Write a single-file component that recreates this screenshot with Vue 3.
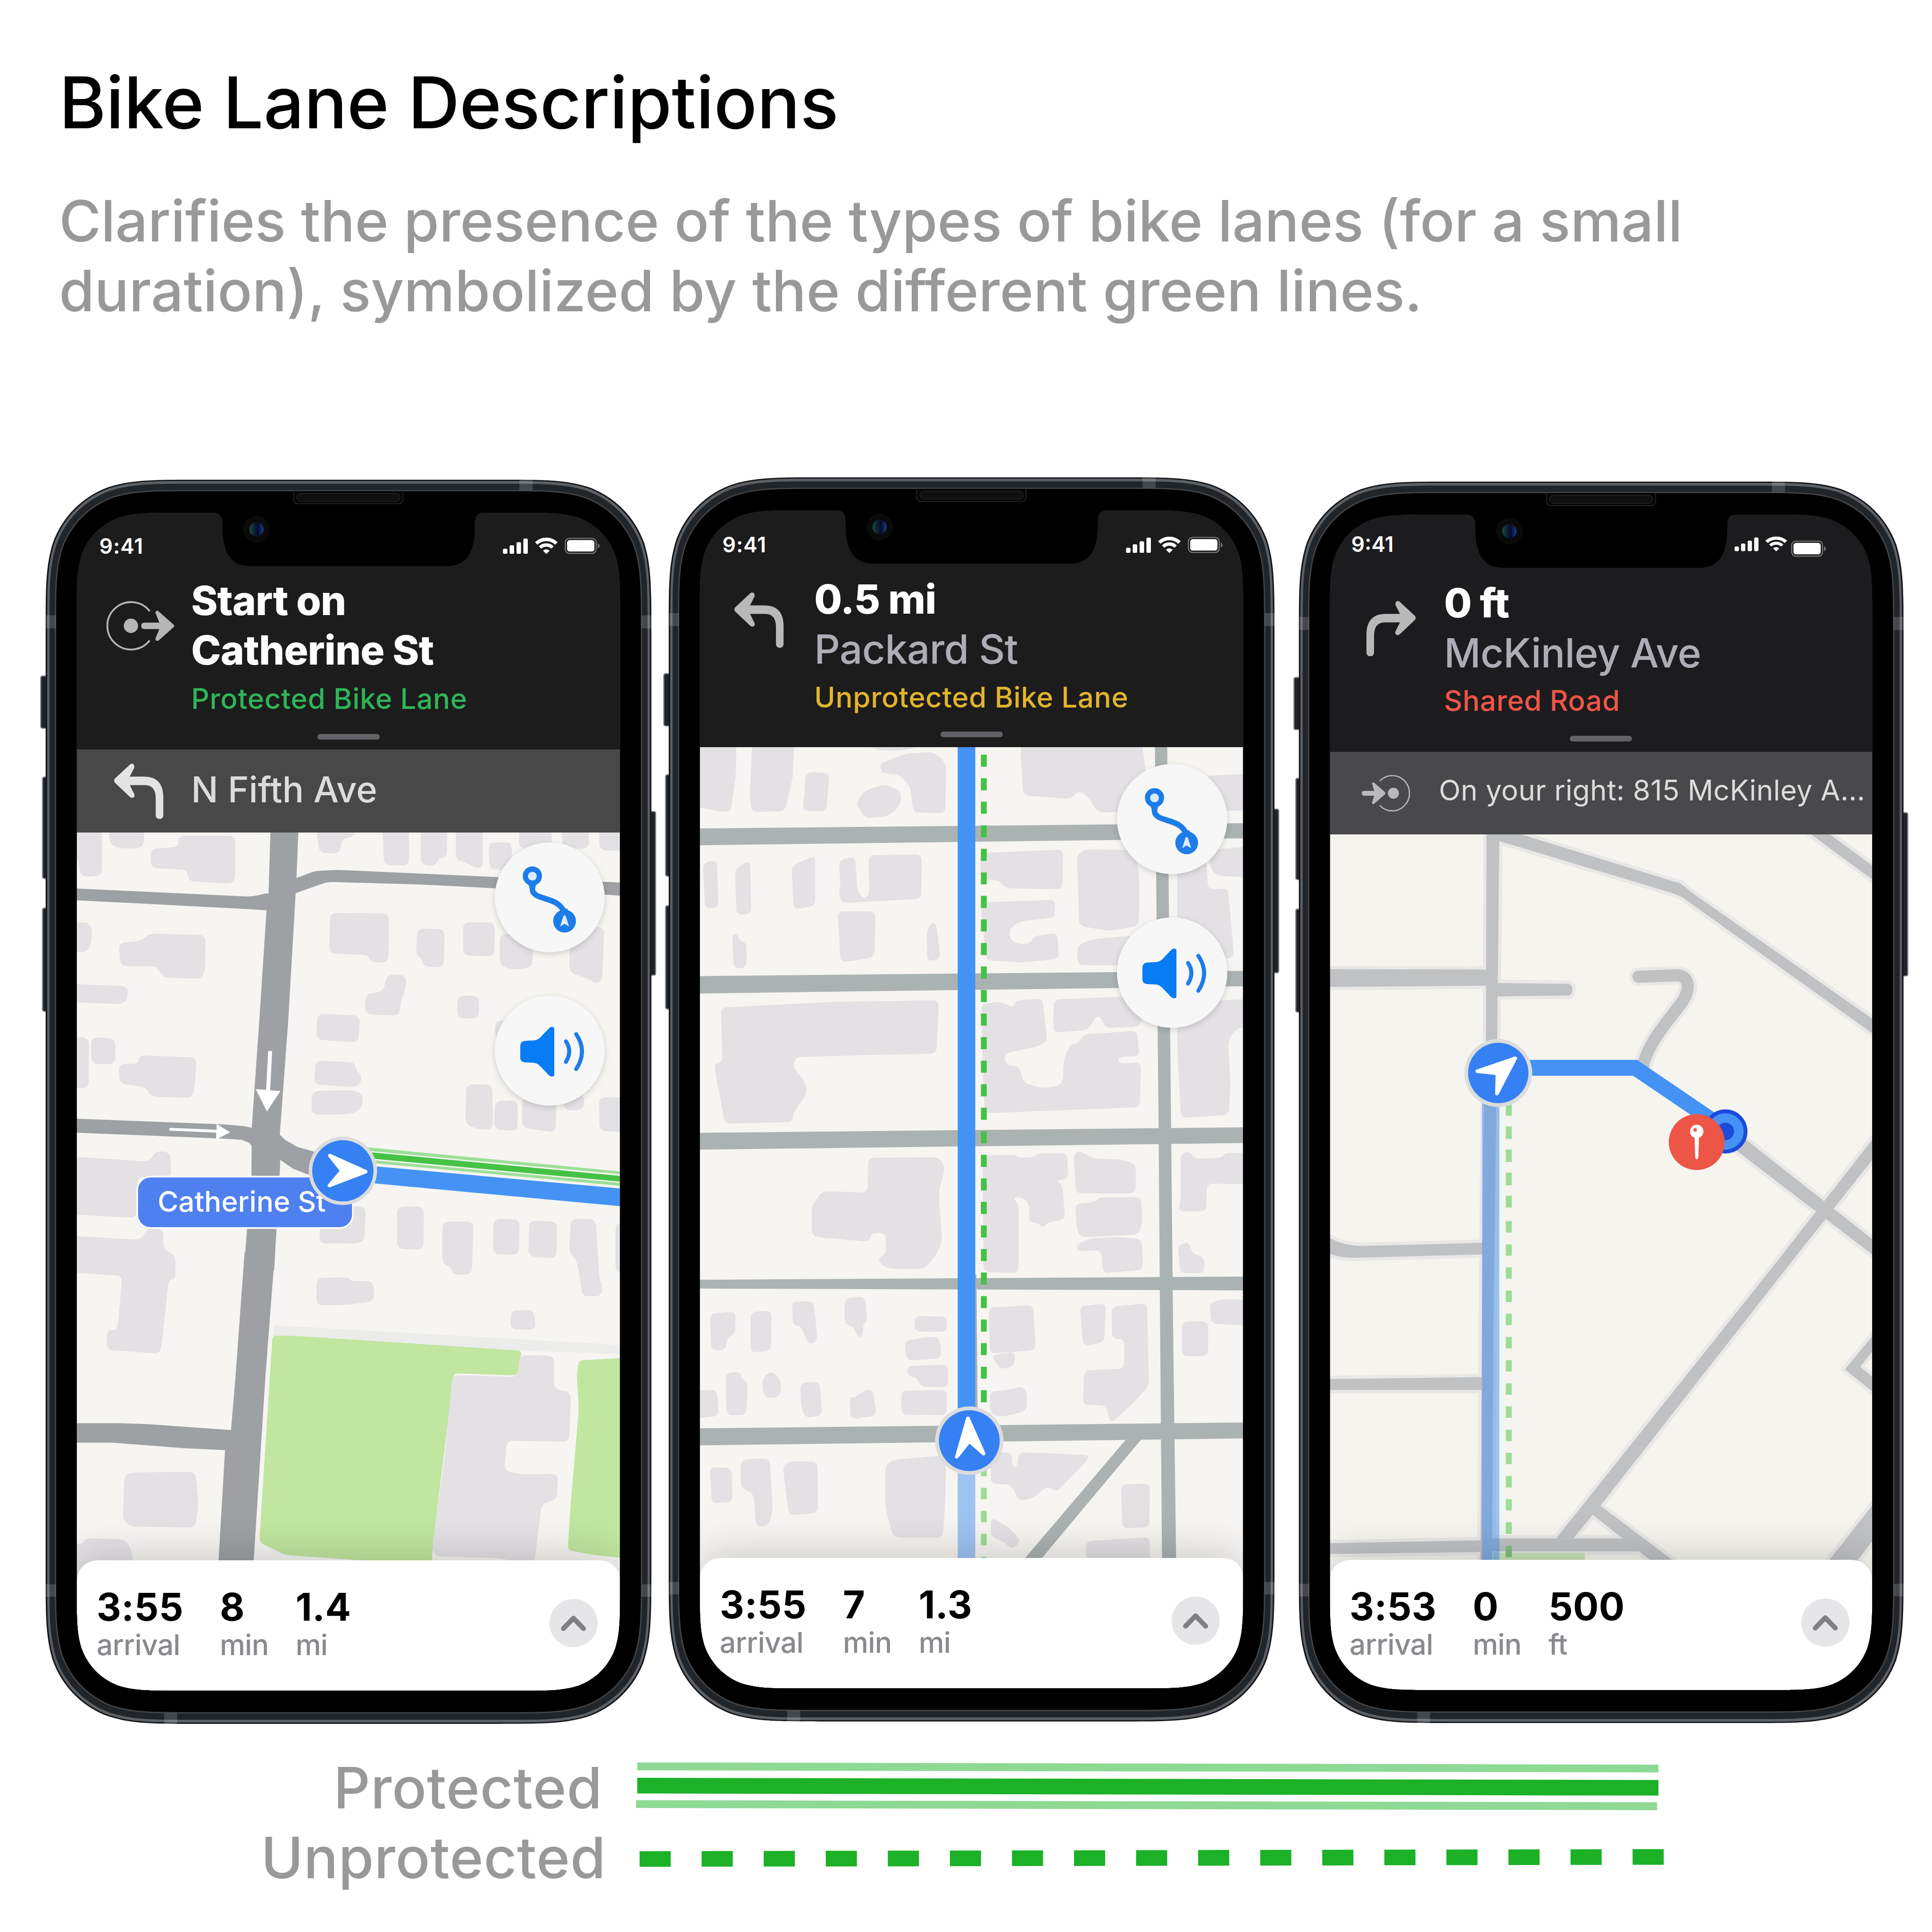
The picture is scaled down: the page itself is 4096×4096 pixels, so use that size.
<script setup>
// Maps a "x,y x,y" list from a tile's own grid onto the board and rounds its corners.
function outline(tile, list, radius = 0) {
  const pts = list.trim().split(/\s+/).map((p) => {
    const [x, y] = p.split(',').map(Number)
    return [tile.x + x * tile.sx, tile.y + y * tile.sy]
  })
  if (!radius) return 'M' + pts.map((p) => p[0].toFixed(1) + ' ' + p[1].toFixed(1)).join('L') + 'Z'
  const n = pts.length
  let d = ''
  for (let i = 0; i < n; i++) {
    const a = pts[(i + n - 1) % n]
    const b = pts[i]
    const c = pts[(i + 1) % n]
    const toward = (q) => {
      const len = Math.hypot(q[0] - b[0], q[1] - b[1]) || 1
      const k = Math.min(radius, len / 2) / len
      return (b[0] + (q[0] - b[0]) * k).toFixed(1) + ' ' + (b[1] + (q[1] - b[1]) * k).toFixed(1)
    }
    d += (i ? 'L' : 'M') + toward(a) + 'Q' + b[0].toFixed(1) + ' ' + b[1].toFixed(1) + ' ' + toward(c)
  }
  return d + 'Z'
}

// Continuous-curvature rectangle, used for the device body and its display.
function squircle(x, y, w, h, r) {
  const a = 1.528665 * r, b = 1.08849 * r, c = 0.868407 * r, e = 0.631494 * r
  const f = 0.07491 * r, g = 0.372824 * r, k = 0.16906 * r
  const R = x + w, B = y + h
  return `M${x + a} ${y}H${R - a}C${R - b} ${y} ${R - c} ${y} ${R - e} ${y + f}C${R - g} ${y + k} ${R - k} ${y + g} ${R - f} ${y + e}` +
    `C${R} ${y + c} ${R} ${y + b} ${R} ${y + a}V${B - a}C${R} ${B - b} ${R} ${B - c} ${R - f} ${B - e}C${R - k} ${B - g} ${R - g} ${B - k} ${R - e} ${B - f}` +
    `C${R - c} ${B} ${R - b} ${B} ${R - a} ${B}H${x + a}C${x + b} ${B} ${x + c} ${B} ${x + e} ${B - f}C${x + g} ${B - k} ${x + k} ${B - g} ${x + f} ${B - e}` +
    `C${x} ${B - c} ${x} ${B - b} ${x} ${B - a}V${y + a}C${x} ${y + b} ${x} ${y + c} ${x + f} ${y + e}C${x + k} ${y + g} ${x + g} ${y + k} ${x + e} ${y + f}` +
    `C${x + c} ${y} ${x + b} ${y} ${x + a} ${y}Z`
}

const body = squircle(14.5, 2, 1354.5, 2782, 222)
const rim = squircle(18, 5, 1347.5, 2776, 219)
const band = squircle(23, 11, 1337.5, 2764, 214)
const lip = squircle(35, 25, 1313.5, 2736, 203)
const bezel = squircle(38, 28, 1307.5, 2730, 200)
const glass = squircle(84, 76, 1215, 2634, 148)

const tiles = {
  a: { x: 80, y: 1840, sx: 0.8929, sy: 0.6378 },
  b: { x: 80, y: 2800, sx: 0.8929, sy: 0.7015 },
  c: { x: 1480, y: 1050, sx: 0.8929, sy: 0.6378 },
  d: { x: 1480, y: 2000, sx: 0.8929, sy: 0.6059 },
  e: { x: 1480, y: 2850, sx: 0.8929, sy: 0.6696 },
  o: { x: 0, y: 0, sx: 1, sy: 1 },
}
const shapes = (tile, radius, lists) => lists.map((l) => outline(tiles[tile], l, radius))

const catherine = {
  buildings: [
    ...shapes('a', 16, [
      '90,0 166,0 166,185 112,190 106,125 90,120', '183,0 271,0 271,85 230,92 186,80',
      '358,44 500,44 500,180 495,213 382,205 380,165 288,158 288,90 358,85', '702,0 805,0 798,50 766,55 762,108 710,105',
      '868,0 935,0 935,150 872,148', '963,0 1030,0 1030,120 1008,125 1000,152 965,148',
      '1052,0 1119,0 1119,158 1100,158 1080,140 1052,130', '1134,68 1192,68 1192,168 1136,162',
      '1210,0 1292,0 1292,90 1210,90', '1315,0 1385,0 1385,90 1320,90', '1410,0 1490,0 1490,97 1412,97',
      '70,348 138,350 142,400 132,453 70,453', '285,388 425,393 425,500 418,546 318,543 305,503 212,502 208,420 262,415',
      '70,563 228,573 232,600 222,636 70,628', '70,752 133,752 133,930 70,932', '138,752 199,755 199,846 140,846',
      '258,815 403,822 400,900 393,965 288,960 275,925 210,915 208,845 258,845',
      '737,315 885,318 883,490 837,488 832,463 735,458', '955,370 1024,372 1022,505 972,505 965,470 952,465',
      '1070,348 1150,350 1148,468 1070,465', '880,530 928,535 927,580 915,620 910,677 824,670 826,600 870,592',
      '1162,390 1245,390 1244,505 1195,516 1162,500', '1338,370 1423,365 1423,400 1418,555 1402,563 1380,545 1336,525',
      '1056,606 1110,606 1110,686 1056,686', '706,668 812,676 808,770 703,760', '1150,695 1200,690 1200,760 1150,755',
      '700,833 800,840 802,870 815,880 815,910 800,927 697,917', '692,940 800,937 819,955 818,1000 790,1022 690,1023',
      '1078,916 1143,918 1145,1070 1125,1078 1095,1068 1076,1055', '1150,975 1207,973 1207,1080 1148,1075',
      '1218,960 1304,960 1302,1085 1270,1080 1218,1068', '1318,950 1373,950 1373,1005 1325,1010',
      '1410,962 1490,962 1490,1085 1412,1080', '70,1168 285,1188 300,1150 338,1155 338,1245 255,1240 253,1385 70,1372',
      '715,1345 827,1345 823,1470 790,1475 710,1475', '905,1345 972,1345 971,1496 905,1494',
      '1018,1398 1097,1398 1092,1584 1045,1584 1042,1560 1018,1545', '1147,1388 1212,1390 1210,1515 1145,1512',
      '1235,1395 1306,1398 1304,1527 1234,1520', '1340,1388 1402,1388 1412,1600 1419,1620 1417,1660 1368,1660 1366,1620 1354,1530 1336,1510',
      '1452,1402 1490,1402 1490,1578 1452,1578',
    ]),
    ...shapes('b', 16, [
      '70,-54 265,-39 278,-76 318,-76 320,-10 350,10 350,87 333,87 313,323 178,312 178,248 204,250 217,75 70,64',
      '703,82 785,80 790,92 845,92 848,155 790,167 703,170', '1190,185 1248,185 1252,248 1188,246',
      '235,702 400,700 408,800 400,878 235,875 218,850 222,715', '80,930 120,930 122,912 225,915 243,960 243,1100 80,1100',
    ]),
  ],
  alley: outline(tiles.b, '597,233 1480,297 1480,325 1200,313 593,268'),
  parks: shapes('b', 10, [
    '593,266 640,266 1217,314 1206,393 1047,386 1040,460 1005,820 990,1000 790,980 625,965 560,925 573,660',
    '1360,345 1490,336 1490,978 1400,965 1332,950 1340,800 1360,500 1355,390',
  ]),
  hall: outline(tiles.b, '1043,396 1060,392 1206,398 1212,328 1298,330 1298,437 1340,445 1336,605 1180,600 1173,697 1215,708 1308,707 1305,790 1267,800 1248,1000 1160,975 1000,970 993,940 1025,640', 16),
  roads: [
    ...shapes('a', 0, [
      '588,20 658,20 653,190 651,245 632,700 611,1095 612,1200 597,1568 521,1568 540,1238 541,1068 560,690 578,305 583,250',
      '80,1036 470,1057 520,1063 545,1070 545,1140 535,1122 515,1111 470,1107 80,1085',
      '605,1085 625,1112 655,1136 700,1154 720,1240 680,1232 645,1213 605,1175',
    ]),
    ...shapes('a', 14, ['70,228 540,259 590,243 590,308 540,303 70,269', '635,203 700,168 760,165 1490,211 1490,257 1150,229 960,216 730,207 640,252']),
    ...shapes('b', 0, ['523,0 599,0 575,400 545,1000 457,1000 474,632 489,567 500,400', '80,545 205,545 280,548 500,568 489,632 370,625 190,607 80,607']),
  ],
  arrows: shapes('a', 0, [
    '582,800 592,800 587,938 613,940 579,1012 551,934 577,936', '335,1069 453,1076 453,1056 487,1085 452,1110 452,1086 335,1079',
  ]),
  faint: shapes('a', 0, ['825,1137 1480,1224 1480,1234 825,1149', '825,1180 1480,1264 1480,1275 825,1190']),
  lane: outline(tiles.a, '825,1153 1480,1240 1480,1260 825,1175'),
  route: outline(tiles.a, '825,1201 1480,1284 1480,1346 825,1261'),
}

const packard = {
  buildings: [
    ...shapes('c', 14, [
      '70,940 187,940 185,1080 172,1200 150,1200 70,1178', '227,940 332,940 328,1080 308,1198 225,1202 220,1150',
      '360,1072 372,1060 420,1065 412,1198 352,1198 358,1130', '500,960 665,965 600,986 545,985',
      '545,1033 610,997 680,990 712,1030 710,1205 630,1203 622,1110 595,1070 550,1065',
      '485,1170 510,1125 560,1104 600,1130 597,1180 565,1217 510,1224',
      '897,940 1200,940 1215,1080 1215,1200 1090,1203 1070,1150 1045,1125 1025,1155 905,1143',
      '1360,1075 1456,1068 1490,1068 1490,1195 1400,1198', '103,1380 138,1368 142,1536 108,1540', '183,1400 221,1370 224,1558 187,1563',
      '325,1390 384,1353 384,1530 330,1543', '442,1372 484,1356 490,1480 505,1506 520,1490 518,1353 651,1349 650,1505 450,1520 443,1480 448,1450',
      '798,1345 1005,1333 1003,1472 860,1468 845,1440 798,1438', '1040,1350 1060,1333 1187,1335 1196,1440 1194,1600 1120,1618 1045,1600',
      '1291,1340 1362,1335 1368,1472 1418,1468 1433,1712 1291,1720', '1365,1335 1490,1320 1490,1430 1390,1425 1375,1400',
    ]),
    ...shapes('d', 14, [
      '440,63 535,63 532,232 448,252', '176,148 190,147 194,172 212,178 212,272 180,274', '663,130 682,98 690,130 697,240 665,247',
      '798,30 985,20 985,85 895,100 868,130 875,175 905,186 925,178 930,155 990,142 995,238 900,252 812,243',
      '1040,188 1080,165 1190,152 1190,262 1042,262',
      '800,405 850,395 880,420 885,392 953,384 965,540 945,560 858,587 862,633 895,633 905,695 955,716 1003,702 1008,600 1025,552 1045,548 1055,517 1190,503 1196,597 1144,600 1144,625 1200,620 1197,785 808,808 805,700',
      '982,388 1160,377 1200,400 1200,487 1110,494 1100,452 1085,452 1070,500 980,510',
      '1290,400 1490,385 1490,488 1440,492 1418,540 1424,700 1420,814 1300,825 1292,600',
      '148,418 430,397 694,390 688,587 335,600 328,640 355,680 365,730 328,810 328,840 158,846 130,625 152,620',
      '517,972 695,970 709,1010 693,1100 702,1275 690,1325 658,1381 562,1381 538,1345 561,1330 561,1249 525,1249 518,1282 376,1262 375,1150 402,1095 515,1100',
      '803,962 888,962 890,972 935,970 937,957 1015,955 1018,1052 986,1055 1003,1070 1010,1200 965,1210 955,1232 942,1212 918,1210 922,1150 905,1116 878,1120 893,1140 893,1397 806,1393',
      '1031,960 1045,945 1080,975 1150,978 1187,995 1187,1103 1037,1103', '1035,1142 1085,1135 1095,1118 1200,1116 1204,1200 1195,1255 1050,1265 1040,1240',
      '1040,1290 1070,1270 1140,1265 1202,1272 1205,1385 1105,1398 1100,1313 1040,1316',
      '1300,955 1325,948 1330,975 1402,972 1412,953 1490,955 1490,1070 1365,1067 1363,1170 1293,1170 1300,1120',
      '1292,1295 1320,1281 1328,1325 1360,1340 1358,1398 1298,1397',
    ]),
    ...shapes('e', 14, [
      '121,130 185,123 183,200 165,207 160,252 123,252', '222,125 275,120 273,255 222,260', '326,95 335,89 380,90 390,215 375,234 360,215 350,172 328,168',
      '458,80 508,73 514,155 504,165 503,207 490,209 480,172 457,165', '633,138 714,140 713,191 633,190', '608,220 690,205 701,240 698,280 613,287',
      '615,305 717,300 717,376 648,374 640,345 615,338', '600,387 714,385 713,470 600,467', '160,328 197,324 200,350 214,355 212,468 162,470',
      '252,345 275,320 298,350 298,405 265,415 252,390', '70,385 138,385 143,472 70,480', '347,360 395,357 402,470 358,478 348,430',
      '470,410 485,410 510,384 528,384 538,470 473,483', '818,110 930,102 936,252 822,264', '825,270 885,257 883,305 848,317',
      '822,390 850,388 905,373 915,400 913,455 850,475 823,465', '1047,105 1112,96 1108,225 1055,239',
      '1127,107 1215,95 1220,370 1180,430 1123,497 1113,437 1054,434 1058,320 1158,313 1158,214 1127,214',
      '1371,95 1400,83 1490,83 1490,170 1376,164', '1302,158 1368,155 1368,272 1303,273', '120,643 175,645 177,758 125,763',
      '198,625 215,615 270,614 278,790 265,840 235,838 230,730 198,712', '303,640 318,623 390,624 391,795 318,803',
      '560,635 580,618 712,602 710,760 703,878 580,877 560,780',
      '824,595 877,592 877,642 890,642 894,592 1070,602 1065,620 988,727 967,705 930,745 895,757 875,700 824,698',
      '824,808 870,845 900,888 878,918 855,890 824,875', '1150,700 1222,697 1221,843 1153,847', '1062,890 1222,876 1222,1100 1062,1100',
    ]),
  ],
  roads: [
    ...shapes('c', 0, ['80,1259 1480,1240 1480,1293 80,1318']),
    ...shapes('d', 0, ['80,302 1480,282 1480,339 80,366', '80,880 1480,859 1480,917 80,942', '80,1422 1480,1410 1480,1461 80,1454']),
    ...shapes('e', 0, ['80,513 1480,493 1480,546 80,570', '1165,546 1203,546 885,1052 842,1052', '784,0 788,0 791,480 784,480']),
    ...shapes('o', 0, ['2582.5,1660 2610,1660 2619,2545 2623,2950 2631,3560 2599,3560 2594,2950 2591,2545']),
  ],
}

const mckinley = {
  roads: shapes('o', 0, [
    '3324,1850 3353,1850 3348,2327 3340,2950 3336,3560 3310,3560 3314,2950 3318,2480 3323,2327',
    '3340,1847 3402,1866 3759,1976 3789,2000 4200,2287 4200,2320 3762,2006 3737,1996 3340,1877',
    '4030,1851 4074,1852 4200,1945 4200,1976', '2960,2167 3326,2168 3326,2204 2960,2207',
    '3880,2529 4200,2781 4200,2815 3860,2555', '4200,2532 4200,2577 3984,2850 3578,3368 3518,3440 3480,3440 3951,2850',
    '3558,3384 3578,3366 3818,3547 3766,3547 3665,3469', '2960,3451 3320,3444 3320,3470 2960,3475', '3330,3440 3640,3440 3672,3469 3330,3469',
    '4200,3350 4200,3430 4110,3545 4046,3545', '4200,2972 4126,3062 4200,3122 4200,3089 4160,3056 4200,3006',
    '2960,3084 3318,3079 3318,3108 2960,3108',
  ]).concat([
    'M2960 2760Q3000 2787 3050 2786L3318 2779V2805L3040 2812Q3000 2816 2960 2798Z',
    'M3345 2198L3506 2200Q3516 2201 3516 2213Q3516 2226 3506 2226L3345 2228Z',
  ]),
  curl: 'M3664 2184L3746 2181C3775 2180 3782 2204 3766 2234C3745 2268 3686 2324 3673 2388',
}

const phones = [
  {
    id: 'protected', dark: '#1c1c1c', bar: '#484848', view: '172 1861.6 1215 1672.4',
    title: ['Start on', 'Catherine St'], lane: 'Protected Bike Lane', icon: 'start', next: 'N Fifth Ave',
    stats: [['3:55', 'arrival'], ['8', 'min'], ['1.4', 'mi']],
  },
  {
    id: 'unprotected', dark: '#1c1c1c', view: '1565.3 1671.2 1215 1857',
    title: ['0.5 mi'], street: 'Packard St', lane: 'Unprotected Bike Lane', icon: 'left',
    stats: [['3:55', 'arrival'], ['7', 'min'], ['1.3', 'mi']],
  },
  {
    id: 'shared', dark: '#1c1c1e', bar: '#49494b', view: '2973.3 1865.8 1213 1667.2',
    title: ['0 ft'], street: 'McKinley Ave', lane: 'Shared Road', icon: 'right', next: 'On your right: 815 McKinley A...',
    stats: [['3:53', 'arrival'], ['0', 'min'], ['500', 'ft']],
  },
]

const turn = 'M2 34Q0 38 2 42L36 74Q42 79 46 74Q47 72 46 68L36 48H70Q94 48 94 78V115.500a8.500 8.500 0 0 0 17 0V76Q111 29 68 29H36L46 9Q47 1 41 0Q38 0 36 2.500Z'
</script>

<template>
  <main class="board">
    <header class="intro">
      <h1>Bike Lane Descriptions</h1>
      <p>Clarifies the presence of the types of bike lanes (for a small<br /><span>duration), symbolized by the different green lines.</span></p>
    </header>

    <section class="phones">
      <article v-for="phone in phones" :key="phone.id" class="phone" :class="phone.id">
        <div class="screen">
          <div class="top" :style="{ background: phone.dark }">
            <div class="status">
              <span class="time">9:41</span>
              <svg class="signals" viewBox="900 45 290 60">
                <g class="radio" fill="#fff">
                  <rect x="953" y="81" width="10" height="11.500" rx="3" />
                  <rect x="968" y="73.500" width="10" height="19" rx="3" />
                  <rect x="983.400" y="66.500" width="10" height="26" rx="3" />
                  <rect x="998.600" y="58.500" width="10" height="34" rx="3" />
                  <path d="M1027.500 69.500A32 32 0 0 1 1072.500 69.500" fill="none" stroke="#fff" stroke-width="8" />
                  <path d="M1036 78.500A20 20 0 0 1 1064 78.500" fill="none" stroke="#fff" stroke-width="7.500" />
                  <path d="M1050 93L1042.500 85.500Q1050 79.500 1057.500 85.500Z" />
                </g>
                <g class="battery">
                  <rect x="1092.500" y="58" width="69" height="33.500" rx="9" fill="none" stroke="#777" stroke-width="2.500" />
                  <rect x="1096.500" y="62" width="61" height="25.500" rx="5.500" fill="#fff" />
                  <path d="M1165 69.500Q1169 71 1169 75Q1169 79 1165 80.500Z" fill="#777" />
                </g>
              </svg>
            </div>
            <div class="nav">
              <div class="glyph">
                <svg v-if="phone.icon === 'start'" class="start" viewBox="236 1342 158 114">
                  <g fill="#b6b6b6">
                    <path d="M334.500 1366A53 53 0 1 0 334.500 1431.400" fill="none" stroke="#b6b6b6" stroke-width="4" />
                    <circle cx="292.500" cy="1398.700" r="16" />
                    <path d="M347 1369Q350 1362 355 1367L388 1396Q391 1398.700 388 1401.500L355 1431Q349 1435 347 1428L356 1406H323Q315.500 1406 315.500 1398.700Q315.500 1391.500 323 1391.500H356Z" />
                  </g>
                </svg>
                <svg v-else class="turn" :class="phone.icon" viewBox="0 0 112 124"><path :d="turn" fill="#b8b8b9" /></svg>
              </div>
              <div class="copy">
                <strong v-for="line in phone.title" :key="line">{{ line }}</strong>
                <span v-if="phone.street" class="street">{{ phone.street }}</span>
                <span class="lane">{{ phone.lane }}</span>
              </div>
            </div>
            <i class="grabber"></i>
          </div>

          <div v-if="phone.next" class="next" :style="{ background: phone.bar }">
            <div class="glyph">
              <svg v-if="phone.icon === 'start'" class="turn" viewBox="0 0 112 124"><path :d="turn" fill="#e3e3e3" /></svg>
              <svg v-else class="arrive" viewBox="3042 1730 116 88">
                <g fill="#b9b9bb">
                  <path d="M3084.500 1746.700A38.500 39.500 0 1 1 3084.500 1801.300" fill="none" stroke="#b9b9bb" stroke-width="2.800" />
                  <circle cx="3115" cy="1774" r="12.300" />
                  <path d="M3067 1752Q3068 1748 3072 1750.500L3096 1771.500Q3098 1774 3096 1776.500L3072 1797.500Q3067 1800 3067 1795L3072 1779.500H3049Q3044 1779 3044 1774Q3044 1769 3049 1768.800H3072Z" />
                </g>
              </svg>
            </div>
            <span>{{ phone.next }}</span>
          </div>

          <div class="map">
            <svg class="canvas" :viewBox="phone.view" preserveAspectRatio="none">
              <g v-if="phone.id === 'protected'">
                <rect x="160" y="1850" width="1240" height="1700" fill="#f6f5f1" />
                <path v-for="(d, i) in catherine.buildings" :key="'b' + i" :d="d" fill="#e3e1e3" />
                <path :d="catherine.alley" fill="#ececeb" />
                <path v-for="(d, i) in catherine.parks" :key="'p' + i" :d="d" fill="#c0e69f" />
                <path :d="catherine.hall" fill="#e3e1e3" />
                <path v-for="(d, i) in catherine.roads" :key="'r' + i" :d="d" fill="#9da1a4" />
                <path v-for="(d, i) in catherine.arrows" :key="'w' + i" :d="d" fill="#fff" />
                <path v-for="(d, i) in catherine.faint" :key="'f' + i" :d="d" fill="#9ddf99" />
                <path :d="catherine.lane" fill="#45c246" />
                <path :d="catherine.route" fill="#4493f4" />
                <rect x="307" y="2631" width="482" height="115" rx="30" fill="#4f80ef" stroke="#fff" stroke-width="3.500" />
                <text class="tag" x="352.500" y="2710">Catherine St</text>
                <g transform="translate(766.700 2618)">
                  <circle r="76.500" fill="#dcdcdc" /><circle r="68.500" fill="#3581f4" />
                  <path d="M51 2L-29 -34L-2 0L-30 33Z" class="needle" />
                </g>
              </g>
              <g v-else-if="phone.id === 'unprotected'">
                <rect x="1550" y="1660" width="1250" height="1900" fill="#f6f5f1" />
                <path v-for="(d, i) in packard.buildings" :key="'b' + i" :d="d" fill="#e3e1e3" />
                <path v-for="(d, i) in packard.roads" :key="'r' + i" :d="d" fill="#abb2b2" />
                <rect x="2141.600" y="1660" width="39.300" height="1570" fill="#4493f4" />
                <rect x="2141.600" y="3230" width="39.300" height="320" fill="#9dc3f1" />
                <path d="M2200 1688V3160" stroke="#45c246" stroke-width="13" stroke-dasharray="27 25.600" />
                <path d="M2200 3275V3550" stroke="#9bdd97" stroke-width="13" stroke-dasharray="25.600 25.800" />
                <g transform="translate(2167.500 3221)">
                  <circle r="76.500" fill="#dcdcdc" /><circle r="68" fill="#3581f4" />
                  <path d="M-3 -50L-28 36L0 1L32 29Z" class="needle" />
                </g>
              </g>
              <g v-else>
                <rect x="2960" y="1850" width="1240" height="1700" fill="#f5f4ef" />
                <g fill="#e9e8e7" stroke="#e9e8e7" stroke-width="15">
                  <path v-for="(d, i) in mckinley.roads" :key="'c' + i" :d="d" />
                  <path :d="mckinley.curl" fill="none" stroke-width="41" stroke-linecap="round" />
                </g>
                <path v-for="(d, i) in mckinley.roads" :key="'r' + i" :d="d" fill="#bfc1c3" />
                <path :d="mckinley.curl" fill="none" stroke="#bfc1c3" stroke-width="27" stroke-linecap="round" />
                <rect x="3340" y="3472" width="204" height="60" fill="#c9e3b6" />
                <rect x="3314" y="2420" width="39" height="1130" fill="#4493f4" opacity=".5" />
                <path d="M3374 2467V2700" stroke="#9bdd97" stroke-width="13.400" stroke-dasharray="28 23.700" />
                <path d="M3374 2730.500V3430" stroke="#9bdd97" stroke-width="13.400" stroke-dasharray="25.600 26.200" />
                <path d="M3374 3456.500V3482" stroke="#7fbf7d" stroke-width="13.400" />
                <path d="M3380 2370H3661L3870 2512L3845 2536L3652 2405.500H3380Z" fill="#4493f4" />
                <circle cx="3858.600" cy="2530" r="45" fill="#4493f4" stroke="#1a4bdb" stroke-width="8.500" />
                <circle cx="3858.600" cy="2530" r="19.500" fill="#1a4bdb" />
                <circle cx="3794.400" cy="2553.800" r="62.500" fill="#ed5547" />
                <circle cx="3794.400" cy="2530" r="15" fill="#fff" />
                <path d="M3789.500 2540H3799.500L3798 2588Q3794.400 2597 3791 2588Z" fill="#fff" />
                <circle cx="3790.800" cy="2526.500" r="4" fill="#ed5547" />
                <g transform="translate(3350.500 2399.300)">
                  <circle r="76" fill="#dcdcdc" /><circle r="67.500" fill="#3581f4" />
                  <path d="M38 -33L-47 -4L-2 1L-3 46Z" class="needle" />
                </g>
              </g>
            </svg>
            <div v-if="phone.id !== 'shared'" class="controls">
              <button aria-label="Route">
                <svg viewBox="0 0 246 246">
                  <path d="M84 88V104C84 132 146 118 156 160" fill="none" stroke="#1c7de8" stroke-width="12.500" />
                  <path d="M65 84Q76 92 78 102H90Q92 92 103 84Z" fill="#1c7de8" />
                  <path d="M150 148H162Q164 156 176 164H136Q148 156 150 148Z" fill="#1c7de8" />
                  <circle cx="84" cy="75" r="21.500" fill="#1c7de8" /><circle cx="84" cy="75.500" r="9.800" fill="#deebfa" />
                  <circle cx="156" cy="176" r="25.500" fill="#1c7de8" />
                  <path d="M156 163Q158.500 163 160 169L166 188L156 182L146 188L152 169Q153.500 163 156 163Z" fill="#deebfa" />
                </svg>
              </button>
              <button aria-label="Sound">
                <svg viewBox="0 0 246 246">
                  <path d="M57 113Q57 102 67 101L87 100Q94 100 101 94L121 73Q127 67 133 72V179Q127 183 121 178L101 157Q94 150 87 150L67 149Q57 148 57 139Z" fill="#087cf5" />
                  <path d="M159 102Q174 124 159 148M182 86Q208 124 182 164" fill="none" stroke="#1c7de8" stroke-width="9" stroke-linecap="round" />
                </svg>
              </button>
            </div>
          </div>

          <div class="sheet">
            <dl>
              <div v-for="[value, label] in phone.stats" :key="label"><dt>{{ value }}</dt><dd>{{ label }}</dd></div>
            </dl>
            <button class="expand" aria-label="Expand">
              <svg viewBox="0 0 107 107"><path d="M31 66L53.500 43L76 66" fill="none" stroke="#808084" stroke-width="11" stroke-linecap="round" stroke-linejoin="round" /></svg>
            </button>
          </div>
        </div>

        <svg class="frame" viewBox="0 0 1386 2790" preserveAspectRatio="none">
          <defs>
            <linearGradient :id="'lens-' + phone.id" x1="0" x2="1">
              <stop offset="0" stop-color="#1d4a43" /><stop offset=".35" stop-color="#0a2233" /><stop offset=".6" stop-color="#050a28" /><stop offset="1" stop-color="#183f88" />
            </linearGradient>
          </defs>
          <g fill="#202428" stroke="#85888a" stroke-width="2.500">
            <rect x="3.500" y="441" width="20" height="117" rx="4" /><rect x="7.500" y="667" width="20" height="227" rx="4" />
            <rect x="7.500" y="960" width="20" height="231" rx="4" /><rect x="1358" y="744" width="20.500" height="366" rx="4" />
          </g>
          <path fill-rule="evenodd" fill="#15181a" :d="body + glass" />
          <path fill-rule="evenodd" fill="#5d6165" :d="rim + glass" />
          <path fill-rule="evenodd" fill="#20252a" :d="band + glass" />
          <path fill-rule="evenodd" fill="#434445" :d="lip + glass" />
          <g fill="#fff" opacity=".16">
            <rect x="15" y="305.500" width="22" height="29" /><rect x="1347" y="305.500" width="22" height="29" />
            <rect x="15" y="2472" width="22" height="28" /><rect x="1347" y="2472" width="22" height="28" />
            <rect x="1074" y="2" width="29.500" height="24" /><rect x="279.500" y="2760" width="29" height="24" />
          </g>
          <path fill-rule="evenodd" fill="#000" :d="bezel + glass" />
          <path d="M390 74V76Q409.500 76 410 98V108C410 165 428 195.400 474 195.400H910C956 195.400 974 165 974 108V98Q974.500 76 993 76V74Z" fill="#000" />
          <path d="M569 28V46Q569 56 580 56H803Q813.500 56 813.500 46V28" fill="#050505" stroke="#242424" stroke-width="2" />
          <rect x="576" y="33" width="231" height="18" rx="9" fill="#0f0f0f" stroke="#262626" stroke-width="1.500" />
          <circle cx="486" cy="113" r="30" fill="#0a0a0b" />
          <circle cx="486" cy="113" r="16" :fill="`url(#lens-${phone.id})`" />
        </svg>
      </article>
    </section>

    <footer class="legend">
      <div class="entry">
        <span>Protected</span>
        <svg viewBox="1400 3919.500 2360 156">
          <path d="M1425.300 3941L3708.700 3946V3963.500L1425.300 3958.800Z" fill="#8ed994" />
          <path d="M1425.300 3975.500L3708.700 3980.300V4015.300L1425.300 4010.500Z" fill="#1cb127" />
          <path d="M1422.500 4025.500L3705.800 4030.300V4048L1422.500 4043Z" fill="#8ed994" />
        </svg>
      </div>
      <div class="entry wide">
        <span>Unprotected</span>
        <svg viewBox="1400 4075.500 2360 156">
          <path d="M1430.500 4157L3720.700 4152.300" stroke="#1cb127" stroke-width="35" stroke-dasharray="69.600 69.180" />
        </svg>
      </div>
    </footer>
  </main>
</template>

<style>
html {
  font-size: 94.8148px;
}
body {
  margin: 0;
  background: #fff;
}
</style>

<style scoped>
.board {
  display: flex;
  flex-direction: column;
  width: 43.2rem;
  height: 43.2rem;
  overflow: hidden;
  background: #fff;
  color: #000;
  font-family: Inter, "Liberation Sans", sans-serif;
}
.board svg {
  display: block;
}
.intro {
  box-sizing: border-box;
  flex: none;
  height: 10.65rem;
  padding: 1.332rem 0 0 1.32rem;
}
.intro h1 {
  margin: 0;
  font-size: 1.6rem;
  font-weight: 500;
  letter-spacing: -0.0018rem;
  line-height: 1.94rem;
}
.intro p {
  margin: 0.887rem 0 0;
  color: #999;
  font-size: 1.28rem;
  font-weight: 500;
  letter-spacing: -0.0006rem;
  line-height: 1.56rem;
  white-space: nowrap;
}
.intro p span {
  letter-spacing: 0.0015rem;
}
.phones {
  display: flex;
  flex: none;
  align-items: flex-start;
  box-sizing: border-box;
  height: 28.545rem;
  padding-left: 0.88rem;
}
.phone {
  position: relative;
  box-sizing: border-box;
  flex: none;
  width: 13.86rem;
  height: 27.9rem;
  padding: 0.76rem 0.87rem 0.8rem 0.84rem;
}
.protected {
  margin-top: 0.05rem;
}
.unprotected {
  margin-left: 0.073rem;
}
.shared {
  width: 13.835rem;
  height: 27.84rem;
  margin: 0.1rem 0 0 0.222rem;
  padding-top: 0.75rem;
}
.frame {
  position: absolute;
  inset: 0;
  width: 100%;
  height: 100%;
  pointer-events: none;
}
.screen {
  display: flex;
  flex-direction: column;
  height: 100%;
  border-radius: 1.2rem;
  overflow: hidden;
  background: #fff;
}
.top {
  flex: none;
  display: flex;
  flex-direction: column;
  height: 5.297rem;
  color: #fff;
}
.unprotected .top {
  height: 5.299rem;
}
.shared .top {
  height: 5.308rem;
}
.status {
  box-sizing: border-box;
  display: flex;
  justify-content: space-between;
  align-items: flex-start;
  flex: none;
  height: 1.415rem;
  padding: 0.45rem 0.25rem 0 0.5rem;
}
.unprotected .status {
  height: 1.44rem;
  padding-top: 0.475rem;
}
.shared .status {
  height: 1.435rem;
  padding-top: 0.47rem;
  padding-left: 0.48rem;
}
.time {
  margin-top: 0.015rem;
  font-size: 0.47rem;
  font-weight: 600;
  letter-spacing: 0.01rem;
  line-height: 0.57rem;
}
.shared .time {
  margin-top: -0.08rem;
  letter-spacing: 0;
}
.signals {
  width: 2.9rem;
  height: 0.6rem;
}
.shared .radio {
  transform: translate(-7px, -3px) scale(0.96, 0.9);
}
.shared .battery {
  transform: translate(-57px, 0);
}
.nav {
  display: flex;
  flex: none;
  height: 3.535rem;
}
.shared .nav {
  height: 3.515rem;
}
.unprotected .nav {
  height: 3.51rem;
}
.glyph {
  flex: none;
  width: 2.555rem;
}
.start {
  width: 1.58rem;
  height: 1.14rem;
  margin: 0.55rem 0 0 0.64rem;
}
.turn {
  width: 1.12rem;
  height: 1.24rem;
  margin: 0.4rem 0 0 0.755rem;
}
.turn.right {
  margin: 0.5rem 0 0 0.81rem;
  transform: scaleX(-1);
}
.next .turn {
  margin: 0.315rem 0 0 0.82rem;
}
.copy {
  display: flex;
  flex-direction: column;
  white-space: nowrap;
}
.copy strong {
  font-size: 0.9rem;
  font-weight: 800;
  letter-spacing: -0.01rem;
  line-height: 1.11rem;
}
.street {
  color: #aeacb4;
  font-size: 0.9rem;
  font-weight: 450;
  letter-spacing: -0.008rem;
  line-height: 1.11rem;
}
.lane {
  margin-top: 0.15rem;
  font-size: 0.635rem;
  font-weight: 500;
  letter-spacing: 0.0065rem;
  line-height: 0.76rem;
}
.shared .lane {
  margin-top: 0.135rem;
}
.protected .lane {
  margin-top: 0.16rem;
  color: #2fb457;
}
.unprotected .lane {
  color: #e2b42c;
}
.shared .lane {
  color: #ef5547;
}
.grabber {
  align-self: center;
  width: 1.39rem;
  height: 0.13rem;
  border-radius: 0.065rem;
  background: #626267;
}
.next {
  display: flex;
  flex: none;
  height: 1.86rem;
  color: #dcdcdd;
  font-size: 0.8rem;
  font-weight: 450;
  line-height: 1.8rem;
  white-space: nowrap;
}
.shared .next {
  height: 1.85rem;
  font-size: 0.635rem;
  font-weight: 400;
  letter-spacing: 0.0028rem;
  line-height: 1.72rem;
}
.shared .next .glyph {
  width: 2.44rem;
}
.arrive {
  width: 1.16rem;
  height: 0.88rem;
  margin: 0.492rem 0 0 0.69rem;
}
.map {
  position: relative;
  flex: 1;
  min-height: 0;
  margin-bottom: -0.45rem;
}
.canvas {
  width: 100%;
  height: 100%;
}
.tag {
  fill: #fff;
  font-size: 63.5px;
  font-weight: 500;
}
.needle {
  fill: #fff;
  stroke: #fff;
  stroke-width: 8;
  stroke-linejoin: round;
}
.controls {
  position: absolute;
  top: 0.22rem;
  right: 0.35rem;
  display: flex;
  flex-direction: column;
  gap: 0.97rem;
}
.unprotected .controls {
  top: 0.38rem;
  right: 0.365rem;
}
button {
  flex: none;
  padding: 0;
  border: 0;
  border-radius: 50%;
}
.controls button {
  width: 2.46rem;
  height: 2.46rem;
  background: #f7f7f7;
  box-shadow: 0 0.04rem 0.14rem rgba(0, 0, 0, 0.16);
}
.sheet {
  position: relative;
  box-sizing: border-box;
  display: flex;
  justify-content: space-between;
  align-items: flex-start;
  flex: none;
  height: 2.91rem;
  padding: 0.556rem 0.508rem 0 0.44rem;
  border-radius: 0.46rem 0.46rem 0 0;
  background: #fff;
  box-shadow: 0 -0.04rem 1rem rgba(0, 0, 0, 0.2);
}
.unprotected .sheet {
  padding-right: 0.53rem;
}
dl {
  display: grid;
  grid-template-columns: 2.755rem 1.695rem auto;
  margin: 0;
}
dt {
  font-size: 0.85rem;
  font-weight: 700;
  letter-spacing: 0.006rem;
  line-height: 0.97rem;
}
dd {
  margin: 0;
  color: #8a8a8e;
  font-size: 0.64rem;
  font-weight: 450;
  letter-spacing: -0.008rem;
  line-height: 0.72rem;
}
.expand {
  width: 1.07rem;
  height: 1.07rem;
  margin-top: 0.31rem;
  background: #e6e6e8;
}
.entry {
  display: flex;
  height: 1.56rem;
  color: #999;
  font-size: 1.28rem;
  font-weight: 500;
  letter-spacing: 0.0075rem;
  line-height: 1.56rem;
}
.entry span {
  box-sizing: border-box;
  flex: none;
  width: 14rem;
  padding-right: 0.53rem;
  text-align: right;
}
.entry.wide span {
  padding-right: 0.45rem;
}
.entry svg {
  width: 23.6rem;
  height: 1.56rem;
}
</style>
